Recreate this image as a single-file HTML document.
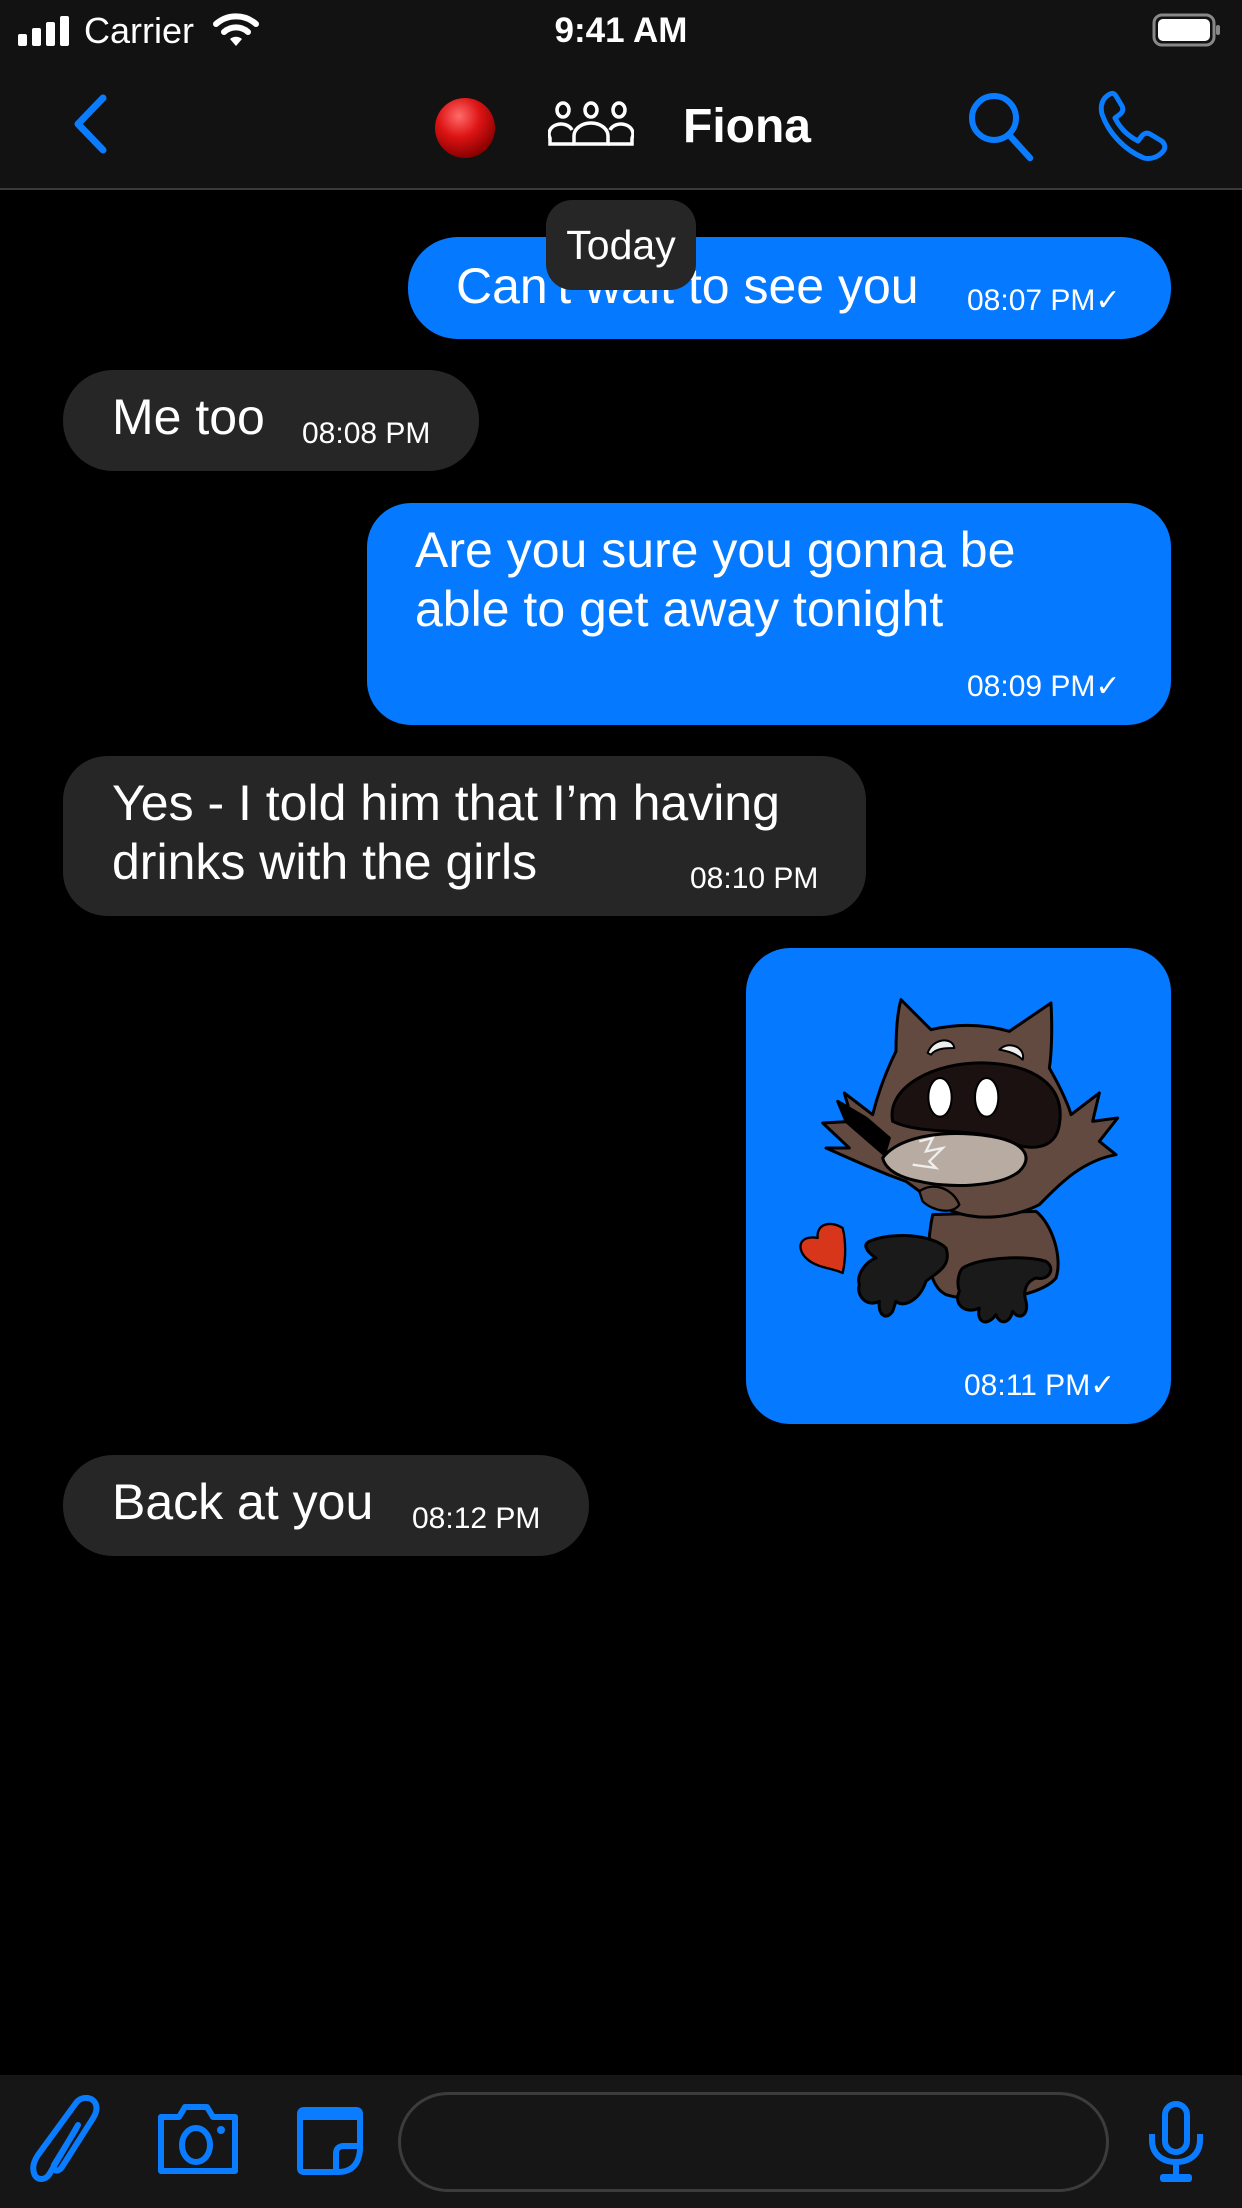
<!DOCTYPE html>
<html><head><meta charset="utf-8"><style>
*{margin:0;padding:0;box-sizing:border-box}
body{width:1242px;height:2208px;background:#000;position:relative;overflow:hidden;font-family:"Liberation Sans",sans-serif;color:#fff}
.a{position:absolute}
.hdr{left:0;top:0;width:1242px;height:190px;background:#121212;border-bottom:2px solid #3a3a3a}
.b{position:absolute;border-radius:50px}
.blue{background:#0579ff}
.gray{background:#262626}
.t{position:absolute;font-size:50px;white-space:nowrap;line-height:60px}
.ts{position:absolute;font-size:30px;white-space:nowrap;line-height:32px}
</style></head><body>
<div class="a hdr"></div>
<!-- status bar -->
<svg class="a" style="left:18px;top:16px" width="56" height="30" viewBox="0 0 56 30"><rect x="0" y="18" width="9" height="12" rx="2" fill="#fff"/><rect x="14" y="12" width="9" height="18" rx="2" fill="#fff"/><rect x="28" y="6" width="9" height="24" rx="2" fill="#fff"/><rect x="42" y="0" width="9" height="30" rx="2" fill="#fff"/></svg>
<div class="a" style="left:84px;top:10px;font-size:36px;line-height:42px">Carrier</div>
<svg class="a" style="left:212px;top:12px" width="48" height="36" viewBox="0 0 48 36"><path d="M4 12 A30 30 0 0 1 44 12" stroke="#fff" stroke-width="6" fill="none" stroke-linecap="round"/><path d="M12 20 A18 18 0 0 1 36 20" stroke="#fff" stroke-width="6" fill="none" stroke-linecap="round"/><path d="M18 27 L24 34 L30 27 A9 9 0 0 0 18 27Z" fill="#fff"/></svg>
<div class="a" style="left:521px;top:10px;width:200px;text-align:center;font-size:35px;line-height:42px;font-weight:bold">9:41 AM</div>
<svg class="a" style="left:1152px;top:13px" width="70" height="34" viewBox="0 0 70 34"><rect x="2" y="2" width="60" height="30" rx="8" fill="none" stroke="#888" stroke-width="3"/><rect x="6" y="6" width="52" height="22" rx="5" fill="#fff"/><rect x="64" y="12" width="4" height="10" rx="2" fill="#888"/></svg>
<!-- nav -->
<svg class="a" style="left:70px;top:94px" width="40" height="60" viewBox="0 0 40 60"><path d="M33 4 L8 30 L33 56" stroke="#0a7cff" stroke-width="7" fill="none" stroke-linecap="round" stroke-linejoin="round"/></svg>
<svg class="a" style="left:433px;top:96px" width="64" height="64" viewBox="0 0 64 64"><defs><radialGradient id="r" cx="0.4" cy="0.3" r="0.7"><stop offset="0" stop-color="#ff6b6b"/><stop offset="0.5" stop-color="#dd1414"/><stop offset="1" stop-color="#8a0000"/></radialGradient></defs><ellipse cx="32" cy="32" rx="30" ry="30" fill="url(#r)"/></svg>
<svg class="a" style="left:548px;top:100px" width="86" height="48" viewBox="0 0 86 48"><g stroke="#fff" stroke-width="3.5" fill="none"><ellipse cx="15" cy="10" rx="6" ry="7"/><ellipse cx="43" cy="10" rx="6" ry="7"/><ellipse cx="71" cy="10" rx="6" ry="7"/><path d="M26 44 H2 V38 A12 10 0 0 1 24 30"/><path d="M60 44 H84 V38 A12 10 0 0 0 62 30"/><path d="M26 44 V36 A17 13 0 0 1 60 36 V44 Z"/></g></svg>
<div class="a" style="left:683px;top:98px;font-size:48px;font-weight:bold;line-height:58px">Fiona</div>
<svg class="a" style="left:966px;top:90px" width="72" height="72" viewBox="0 0 72 72"><circle cx="28" cy="28" r="22" stroke="#0a7cff" stroke-width="6" fill="none"/><path d="M44 46 L64 68" stroke="#0a7cff" stroke-width="6.5" stroke-linecap="round"/></svg>
<svg class="a" style="left:1096px;top:90px" width="76" height="72" viewBox="0 0 76 72"><path d="M14 4 C6 8 4 16 6 24 C12 42 28 60 48 68 C56 70 64 66 68 60 C70 56 68 52 64 50 L54 44 C50 42 47 44 45 47 L42 51 C32 46 24 38 19 28 L23 25 C26 23 28 20 26 16 L20 6 C18 3 16 3 14 4Z" stroke="#0a7cff" stroke-width="5" fill="none" stroke-linejoin="round"/></svg>

<!-- bubble 1 -->
<div class="b blue" style="left:408px;top:237px;width:763px;height:102px"></div>
<div class="t" style="left:456px;top:256px">Can't wait to see you</div>
<div class="ts" style="left:967px;top:285px">08:07 PM✓</div>
<div class="a" style="left:546px;top:200px;width:150px;height:90px;background:#262626;border-radius:26px;font-size:41px;text-align:center;line-height:90px;padding-bottom:12px">Today</div>
<!-- bubble 2 -->
<div class="b gray" style="left:63px;top:370px;width:416px;height:101px"></div>
<div class="t" style="left:112px;top:387px">Me too</div>
<div class="ts" style="left:302px;top:418px">08:08 PM</div>
<!-- bubble 3 -->
<div class="b blue" style="left:367px;top:503px;width:804px;height:222px;border-radius:44px"></div>
<div class="t" style="left:415px;top:520px">Are you sure you gonna be</div>
<div class="t" style="left:415px;top:579px">able to get away tonight</div>
<div class="ts" style="left:967px;top:671px">08:09 PM✓</div>
<!-- bubble 4 -->
<div class="b gray" style="left:63px;top:756px;width:803px;height:160px;border-radius:44px"></div>
<div class="t" style="left:112px;top:773px">Yes - I told him that I’m having</div>
<div class="t" style="left:112px;top:832px">drinks with the girls</div>
<div class="ts" style="left:690px;top:863px">08:10 PM</div>
<!-- sticker bubble -->
<div class="b blue" style="left:746px;top:948px;width:425px;height:476px;border-radius:44px"></div>
<svg class="a" style="left:746px;top:948px" width="425" height="476" viewBox="0 0 1275 1428">
<g stroke="#000" stroke-width="9" stroke-linejoin="round">
<path d="M560 800 C540 900 540 1010 600 1040 C700 1070 880 1050 930 990 C950 930 920 830 870 790 Z" fill="#61483e"/>
<path d="M465 155 L555 245 C640 225 720 230 790 250 L915 165 C920 260 915 330 910 360 C950 430 970 480 975 500 L1060 435 L1040 520 L1115 510 L1060 580 L1110 620 C1000 640 930 720 880 770 C800 810 700 820 620 790 C560 760 520 730 480 700 C420 680 330 640 240 600 L310 600 L230 525 L320 520 L295 435 L380 500 C400 420 430 350 450 310 C450 240 455 190 465 155Z" fill="#624a40"/>
<path d="M440 520 C420 420 560 340 720 345 C860 350 960 410 940 530 C930 600 860 620 760 570 C650 540 520 560 440 520Z" fill="#1a1110"/>
<path d="M410 630 C460 560 620 540 760 570 C840 590 860 630 820 670 C760 720 600 720 520 700 C470 690 420 670 410 630Z" fill="#b8aca2"/>
<path d="M275 460 L360 510 L430 570 L415 620 L300 520 Z" fill="#000"/>
<ellipse cx="582" cy="448" rx="35" ry="58" fill="#fff" stroke-width="6"/>
<ellipse cx="722" cy="448" rx="35" ry="58" fill="#fff" stroke-width="6"/>
<path d="M545 315 C560 270 620 265 625 300 C600 300 570 300 555 320Z" fill="#eee" stroke-width="6"/>
<path d="M760 305 C790 275 840 300 830 335 C815 320 790 310 760 305Z" fill="#eee" stroke-width="6"/>
<path d="M520 730 C560 700 620 720 640 770 C620 800 560 790 530 760Z" fill="#624a40" stroke-width="7"/>
<path d="M290 840 C250 815 210 830 215 870 C160 860 150 900 180 930 C210 960 260 960 290 975 C300 930 300 880 290 840Z" fill="#d8361a" stroke-width="7"/>
<path d="M370 880 C440 850 560 860 600 900 C620 960 560 980 540 1000 C520 1060 470 1080 450 1060 L440 1090 C420 1120 395 1100 400 1060 C360 1080 330 1040 340 1010 C330 980 360 940 390 930 C360 910 350 890 370 880Z" fill="#1a1a1a"/>
<path d="M650 960 C700 930 830 920 900 940 C930 960 910 1000 870 990 C840 1000 830 1030 840 1060 C850 1100 820 1120 800 1090 C790 1130 760 1130 750 1100 C720 1140 690 1120 700 1080 C660 1100 620 1070 640 1030 C630 1000 640 970 650 960Z" fill="#1a1a1a"/>
</g>
<path d="M520 580 L560 570 L540 610 L590 600 L550 640 L570 660 L500 650" stroke="#eee" stroke-width="7" fill="none"/>
</svg>
<div class="ts" style="left:964px;top:1370px">08:11 PM✓</div>
<!-- bubble 6 -->
<div class="b gray" style="left:63px;top:1455px;width:526px;height:101px"></div>
<div class="t" style="left:112px;top:1472px">Back at you</div>
<div class="ts" style="left:412px;top:1503px">08:12 PM</div>

<!-- bottom bar -->
<div class="a" style="left:0;top:2075px;width:1242px;height:133px;background:#161616"></div>
<div class="a" style="left:398px;top:2092px;width:711px;height:100px;border:3px solid #3c3c3c;border-radius:50px"></div>
<svg class="a" style="left:28px;top:2095px" width="80" height="90" viewBox="0 0 80 90"><path d="M50 30 L22 78 C18 86 8 86 6 78 C4 72 6 66 10 60 L48 8 C54 0 66 2 68 10 C70 16 66 22 62 28 L34 72 C30 78 24 76 26 70 L48 34" stroke="#0a7cff" stroke-width="6" fill="none" stroke-linecap="round"/></svg>
<svg class="a" style="left:155px;top:2103px" width="86" height="72" viewBox="0 0 86 72"><path d="M6 14 H24 L30 4 H52 L58 14 H80 V68 H6 Z" stroke="#0a7cff" stroke-width="6" fill="none" stroke-linejoin="round"/><ellipse cx="41" cy="42" rx="14" ry="17" stroke="#0a7cff" stroke-width="6" fill="none"/><circle cx="66" cy="27" r="4" fill="#0a7cff"/></svg>
<svg class="a" style="left:296px;top:2106px" width="68" height="70" viewBox="0 0 68 70"><path d="M8 4 H60 Q64 4 64 8 V44 Q62 66 42 66 H8 Q4 66 4 62 V8 Q4 4 8 4Z" stroke="#0a7cff" stroke-width="6" fill="none"/><path d="M40 66 V48 Q40 40 48 40 H64" stroke="#0a7cff" stroke-width="6" fill="none"/><rect x="4" y="4" width="60" height="10" fill="#0a7cff"/></svg>
<svg class="a" style="left:1146px;top:2100px" width="60" height="84" viewBox="0 0 60 84"><rect x="19" y="4" width="22" height="48" rx="11" stroke="#0a7cff" stroke-width="6" fill="none"/><path d="M6 34 V40 C6 54 16 62 30 62 C44 62 54 54 54 40 V34" stroke="#0a7cff" stroke-width="6" fill="none"/><path d="M30 62 V76" stroke="#0a7cff" stroke-width="6"/><rect x="14" y="74" width="32" height="8" rx="3" fill="#0a7cff"/></svg>
</body></html>
